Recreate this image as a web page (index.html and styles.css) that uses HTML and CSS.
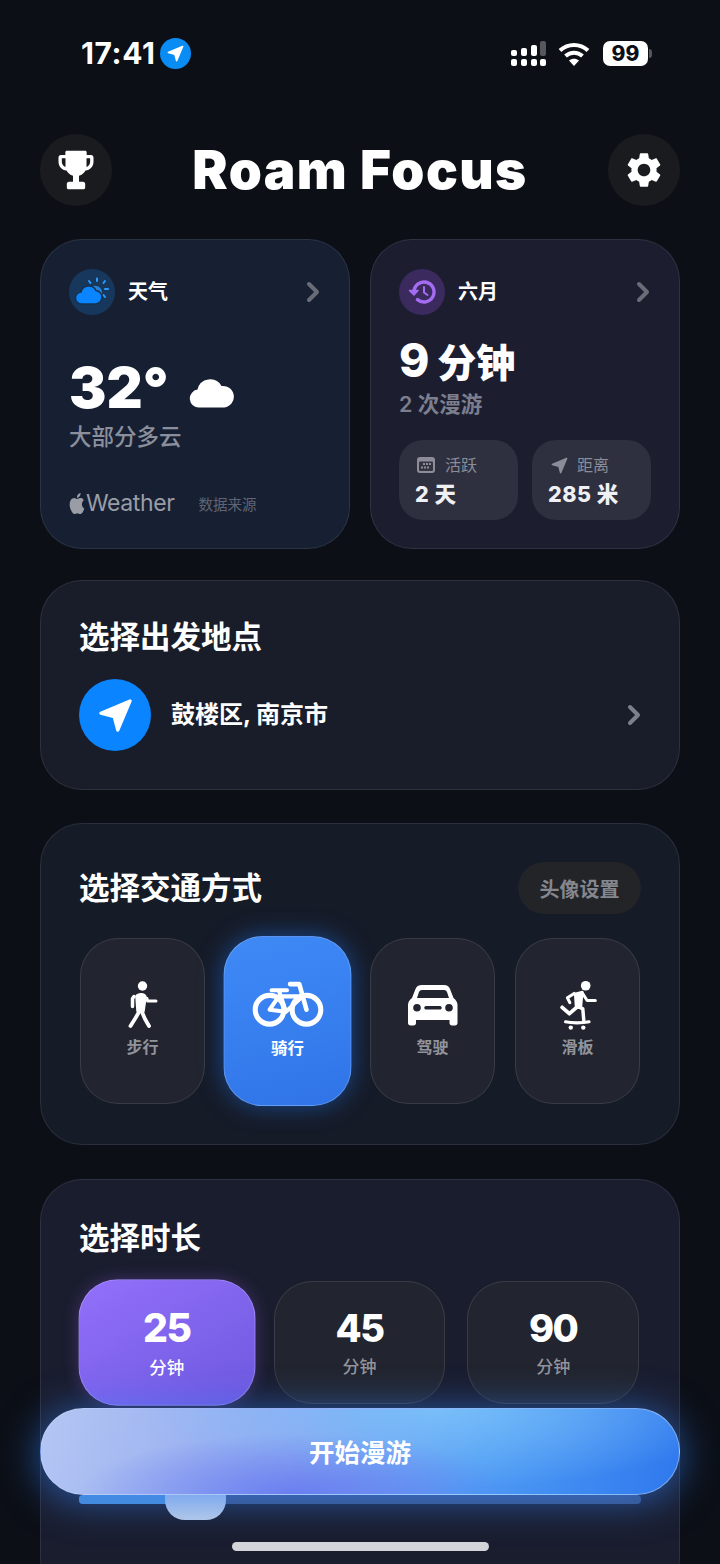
FILE: index.html
```html
<!DOCTYPE html>
<html lang="zh">

<head>
    <meta charset="UTF-8">
    <title>Roam Focus</title>
    <link rel="stylesheet" href="styles.css">
</head>

<body>
    <svg class="defs" width="0" height="0">
        <symbol id="chev" viewBox="0 0 14 22"><path d="M3 3l8 8-8 8" fill="none" stroke="currentColor" stroke-width="4" stroke-linecap="round" stroke-linejoin="round"/></symbol>
        <symbol id="arrow" viewBox="0 0 24 24"><path d="M21 3L3 10.6l8.2 2.2L13.4 21z" fill="currentColor" stroke="currentColor" stroke-width="2" stroke-linejoin="round"/></symbol>
    </svg>

    <div class="phone">
        <div class="status">
            <div class="status-left">
                <span class="time">17:41</span>
                <span class="loc-dot"><svg width="19" height="19"><use href="#arrow"/></svg></span>
            </div>
            <div class="status-right">
                <svg class="signal" width="36" height="26" viewBox="0 0 36 26" fill="#fff">
                    <rect x="0" y="10" width="6" height="6" rx="2"/><rect x="10" y="8" width="6" height="8" rx="2"/><rect x="20" y="5" width="6" height="11" rx="2"/><rect x="29" y="1" width="6" height="15" rx="2" fill="#55575c"/>
                    <rect x="0" y="19" width="6" height="7" rx="2"/><rect x="10" y="19" width="6" height="7" rx="2"/><rect x="20" y="19" width="6" height="7" rx="2"/><rect x="29" y="19" width="6" height="7" rx="2"/>
                </svg>
                <svg class="wifi" width="32" height="25" viewBox="0 0 32 25" fill="none" stroke="#fff" stroke-width="4">
                    <path d="M2 9.5C10 2 22 2 30 9.5"/><path d="M7.5 15c5-4.5 12-4.5 17 0"/><path d="M16 25l-5-5.5c3-2.3 7-2.3 10 0z" fill="#fff" stroke="none"/>
                </svg>
                <div class="battery"><span class="battery-level">99</span><span class="battery-tip"></span></div>
            </div>
        </div>

        <header class="top">
            <button class="round-btn">
                <svg width="40" height="44" viewBox="0 0 24 26" fill="#fff"><path d="M6.5 1.5h11c.5 0 .9.4.9 1V4H21c.9 0 1.5.6 1.5 1.5V8c0 2.8-2 5-4.8 5.3-.8 1.6-2.2 2.7-3.9 3.1V20h2.4c.8 0 1.3.6 1.3 1.3v2.4c0 .5-.3.8-.8.8H7.3c-.5 0-.8-.3-.8-.8v-2.4c0-.7.5-1.3 1.3-1.3h2.4v-3.6c-1.7-.4-3.1-1.5-3.9-3.1C3.500 13 1.500 10.800 1.500 8V5.500C1.500 4.600 2.100 4 3 4h2.600V2.500c0-.6.400-1 .9-1zM3.500 6v2c0 1.500.9 2.800 2.200 3.200V6zm17 0h-2.200v5.200c1.300-.4 2.200-1.700 2.200-3.200z" fill-rule="evenodd"/></svg>
            </button>
            <h1 class="brand">Roam Focus</h1>
            <button class="round-btn">
                <svg width="42" height="42" viewBox="0 0 24 24" fill="#fff"><path d="M19.14 12.94c.04-.3.06-.61.06-.94 0-.32-.02-.64-.07-.94l2.03-1.58c.18-.14.23-.41.12-.61l-1.92-3.32c-.12-.22-.37-.29-.59-.22l-2.39.96c-.5-.38-1.03-.7-1.62-.94l-.36-2.54c-.04-.24-.24-.41-.48-.41h-3.84c-.24 0-.43.17-.47.41l-.36 2.54c-.59.24-1.13.57-1.62.94l-2.39-.96c-.22-.08-.47 0-.59.22L2.74 8.87c-.12.21-.08.47.12.61l2.03 1.58c-.05.3-.09.63-.09.94s.02.64.07.94l-2.03 1.58c-.18.14-.23.41-.12.61l1.92 3.32c.12.22.37.29.59.22l2.39-.96c.5.38 1.03.7 1.62.94l.36 2.54c.05.24.24.41.48.41h3.84c.24 0 .44-.17.47-.41l.36-2.54c.59-.24 1.13-.56 1.62-.94l2.39.96c.22.08.47 0 .59-.22l1.92-3.32c.12-.22.07-.47-.12-.61l-2.01-1.58zM12 15.6c-1.98 0-3.6-1.62-3.6-3.6s1.62-3.6 3.6-3.6 3.6 1.62 3.6 3.6-1.62 3.6-3.6 3.6z"/></svg>
            </button>
        </header>

        <div class="two-up">
            <section class="card small weather">
                <div class="small-head">
                    <span class="badge badge-blue">
                        <svg width="34" height="30" viewBox="0 0 34 30">
                            <g stroke="#2b9bff" stroke-width="2" stroke-linecap="round" fill="none"><path d="M22 1.500v2.500M14 4l1.500 2M30 4l-1.500 2M33 12h-3M30 20l-1.500-2"/></g>
                            <path d="M16 10a7 7 0 0 1 11 6 7 7 0 0 1-3 5l-3-1z" fill="#2b9bff" opacity=".75"/>
                            <path d="M7 27a6 6 0 0 1-1-12 8 8 0 0 1 15-1.500A6.800 6.800 0 0 1 21 27z" fill="#0a84ff" stroke="#17324f" stroke-width="1.500"/>
                        </svg>
                    </span>
                    <span class="small-title">天气</span>
                    <svg class="chev" width="14" height="22"><use href="#chev"/></svg>
                </div>
                <div class="temp-row">
                    <span class="temp">32°</span>
                    <svg width="46" height="32" viewBox="0 0 46 32" fill="#fff"><path d="M10 31.500a9 9 0 0 1-1.500-17.900A13 13 0 0 1 32.500 10 10.800 10.800 0 0 1 35.500 31.500z"/></svg>
                </div>
                <p class="sub">大部分多云</p>
                <div class="source">
                    <svg class="apple" width="18" height="21" viewBox="0 0 24 24" fill="#9a9da6" preserveAspectRatio="none"><path d="M12.152 6.896c-.948 0-2.415-1.078-3.96-1.04-2.04.027-3.91 1.183-4.961 3.014-2.117 3.675-.546 9.103 1.519 12.09 1.013 1.454 2.208 3.09 3.792 3.039 1.52-.065 2.09-.987 3.935-.987 1.831 0 2.35.987 3.96.948 1.637-.026 2.676-1.48 3.676-2.948 1.156-1.688 1.636-3.325 1.662-3.415-.039-.013-3.182-1.221-3.22-4.857-.026-3.04 2.48-4.494 2.597-4.559-1.429-2.09-3.623-2.324-4.39-2.376-2-.156-3.675 1.09-4.61 1.09zM15.53 3.83c.843-1.012 1.4-2.427 1.245-3.83-1.207.052-2.662.805-3.532 1.818-.78.896-1.454 2.338-1.273 3.714 1.338.104 2.715-.688 3.559-1.701"/></svg>
                    <span class="source-name">Weather</span>
                    <span class="source-note">数据来源</span>
                </div>
            </section>

            <section class="card small month">
                <div class="small-head">
                    <span class="badge badge-purple">
                        <svg width="28" height="26" viewBox="0 0 28 26" fill="none" stroke="#a46cf2" stroke-width="3.400" stroke-linecap="round" stroke-linejoin="round">
                            <path d="M6 13a10 10 0 1 1 3.500 7.600"/>
                            <path d="M16 8v5.500l3.500 2.500" stroke-width="2"/>
                            <path d="M1.500 11.500L6 16l4-4.500z" fill="#a46cf2" stroke-width="1.500"/>
                        </svg>
                    </span>
                    <span class="small-title">六月</span>
                    <svg class="chev" width="14" height="22"><use href="#chev"/></svg>
                </div>
                <div class="minutes"><span class="minutes-num">9</span> 分钟</div>
                <p class="sub sub-month">2 次漫游</p>
                <div class="stats">
                    <div class="stat">
                        <div class="stat-label">
                            <svg width="18" height="16" viewBox="0 0 18 16"><rect width="18" height="16" rx="3" fill="#8b8d98"/><rect x="2" y="4.500" width="14" height="9.500" rx="1" fill="#33343f"/><g fill="#8b8d98"><rect x="6" y="6" width="2" height="2"/><rect x="9" y="6" width="2" height="2"/><rect x="12" y="6" width="2" height="2"/><rect x="4" y="9.500" width="2" height="2"/><rect x="7" y="9.500" width="2" height="2"/><rect x="10" y="9.500" width="2" height="2"/></g></svg>
                            活跃
                        </div>
                        <div class="stat-value">2 天</div>
                    </div>
                    <div class="stat">
                        <div class="stat-label">
                            <svg class="stat-arrow" width="19" height="19"><use href="#arrow"/></svg>
                            距离
                        </div>
                        <div class="stat-value">285 米</div>
                    </div>
                </div>
            </section>
        </div>

        <section class="card place">
            <h2 class="section-title">选择出发地点</h2>
            <div class="place-row">
                <span class="place-icon"><svg width="39" height="39"><use href="#arrow"/></svg></span>
                <span class="place-name">鼓楼区, 南京市</span>
                <svg class="chev place-chev" width="14" height="22"><use href="#chev"/></svg>
            </div>
        </section>

        <section class="card modes">
            <div class="modes-head">
                <h2 class="section-title">选择交通方式</h2>
                <button class="pill">头像设置</button>
            </div>
            <div class="mode-grid">
                <div class="tile mode">
                    <svg width="32" height="50" viewBox="0 0 32 50" fill="none" stroke="#fff" stroke-linecap="round" stroke-linejoin="round">
                        <circle cx="15.500" cy="6" r="4.700" fill="#fff" stroke="none"/>
                        <path d="M10 17c0-2.500 7-3.500 8 0l-2 14h-5z" fill="#fff" stroke-width="3.500"/>
                        <path d="M7 16.500l-1.500 2v8" stroke-width="3.500"/>
                        <path d="M20 18.500l.5 2.500H29" stroke-width="3"/>
                        <path d="M12 32L8.500 38 3.500 46" stroke-width="3.800"/>
                        <path d="M15 32l3 7 4 7" stroke-width="3.800"/>
                    </svg>
                    <span class="tile-label">步行</span>
                </div>
                <div class="tile mode active-blue">
                    <svg width="70" height="46" viewBox="0 0 70 46" fill="none" stroke="#fff" stroke-linecap="round" stroke-linejoin="round">
                        <circle cx="17" cy="28" r="14" stroke-width="5"/>
                        <circle cx="53" cy="28" r="14" stroke-width="5"/>
                        <path d="M37 3h9l7 25" stroke-width="4.500"/>
                        <path d="M19 9h15M26 9l7 21M26 15h23L33 30 17 28l9-13" stroke-width="4"/>
                    </svg>
                    <span class="tile-label">骑行</span>
                </div>
                <div class="tile mode">
                    <svg width="50" height="40" viewBox="0 0 50 42"><path d="M14 1h22c3 0 5 1.500 6 4l3.500 9c2.500 2 4 4 4 7v18c0 1.500-1 2.500-2.500 2.500h-3c-1.500 0-2.500-1-2.500-2.500v-3H8v3c0 1.500-1 2.500-2.500 2.500h-3C1 41.500 0 40.500 0 39V21c0-3 1.500-5 4-7l3.500-9c1-2.500 3-4 6.500-4zM14 6c-1.500 0-2.500.7-3 2l-2 6h32l-2-6c-.5-1.300-1.500-2-3-2zM9 20a3.800 3.800 0 1 0 0 7.600A3.800 3.800 0 0 0 9 20zm32 0a3.800 3.800 0 1 0 0 7.600 3.800 3.800 0 0 0 0-7.600zM18 22c-1 0-1.700.8-1.700 1.800s.7 1.800 1.700 1.800h14c1 0 1.700-.8 1.700-1.800S33 22 32 22z" fill="#fff" fill-rule="evenodd"/></svg>
                    <span class="tile-label">驾驶</span>
                </div>
                <div class="tile mode">
                    <svg width="42" height="52" viewBox="0 0 42 52" fill="none" stroke="#fff" stroke-linecap="round" stroke-linejoin="round">
                        <circle cx="29" cy="6" r="5" fill="#fff" stroke="none"/>
                        <path d="M18 14.500l7.500-2L24 29h-5z" fill="#fff" stroke-width="2.500"/>
                        <path d="M25.500 13.500l5 7.800H39" stroke-width="3.200"/>
                        <path d="M17 14l-7 4.500 2.500 5" stroke-width="3.200"/>
                        <path d="M19 29l-7 6-7.500-6.500" stroke-width="4"/>
                        <path d="M22 28l4 2 1 12" stroke-width="3.600"/>
                        <path d="M8 43.500c6 1.500 18 1.500 24.500 0" stroke-width="3.200"/>
                        <circle cx="13.500" cy="49.500" r="2.300" fill="#fff" stroke="none"/>
                        <circle cx="26.500" cy="49.500" r="2.300" fill="#fff" stroke="none"/>
                    </svg>
                    <span class="tile-label">滑板</span>
                </div>
            </div>
        </section>

        <section class="card durations">
            <h2 class="section-title">选择时长</h2>
            <div class="dur-grid">
                <div class="tile dur active-purple"><span class="dur-num">25</span><span class="tile-label">分钟</span></div>
                <div class="tile dur"><span class="dur-num">45</span><span class="tile-label">分钟</span></div>
                <div class="tile dur"><span class="dur-num">90</span><span class="tile-label">分钟</span></div>
            </div>
            <div class="slider">
                <div class="slider-fill"></div>
                <div class="slider-thumb"></div>
            </div>
        </section>

        <button class="start">开始漫游</button>
        <div class="home-bar"></div>
    </div>
</body>

</html>
```

FILE: styles.css
```css
* {
    box-sizing: border-box;
}

html, body {
    margin: 0;
    background: #0c0f16;
}

body {
    font-family: Inter, "Noto Sans CJK SC", sans-serif;
    color: #fff;
}

h1, h2, p {
    margin: 0;
}

button {
    font-family: inherit;
    border: 0;
    padding: 0;
    color: inherit;
}

.defs {
    position: absolute;
}

.phone {
    position: relative;
    width: 720px;
    height: 1564px;
    overflow: hidden;
    padding: 0 40px;
}

/* status bar */
.status {
    height: 134px;
    margin: 0 28px 0 41px;
    padding-top: 38px;
    display: flex;
    justify-content: space-between;
    align-items: flex-start;
}

.status-left {
    display: flex;
    align-items: center;
    gap: 5px;
}

.time {
    font-size: 30px;
    font-weight: 700;
    line-height: 31px;
    letter-spacing: 0.6px;
}

.loc-dot {
    width: 31px;
    height: 31px;
    border-radius: 50%;
    background: #0a8cf5;
    display: flex;
    align-items: center;
    justify-content: center;
}

.status-right {
    display: flex;
    align-items: center;
    gap: 13px;
    padding-top: 2px;
}

.signal {
    margin-right: -2px;
}

.battery {
    display: flex;
    align-items: center;
    gap: 1px;
}

.battery-level {
    width: 45px;
    height: 25px;
    border-radius: 7px;
    background: #fff;
    color: #0b0e15;
    font-size: 21px;
    font-weight: 800;
    line-height: 25px;
    text-align: center;
}

.battery-tip {
    width: 3px;
    height: 9px;
    border-radius: 0 3px 3px 0;
    background: #55575c;
}

/* header */
.top {
    height: 72px;
    margin-bottom: 33px;
    display: flex;
    align-items: center;
    justify-content: space-between;
}

.round-btn {
    width: 72px;
    height: 72px;
    border-radius: 50%;
    background: #1a1b1f;
    display: flex;
    align-items: center;
    justify-content: center;
}

.brand {
    font-size: 53px;
    font-weight: 900;
    letter-spacing: 1.4px;
}

/* cards */
.card {
    border: 1px solid rgba(255, 255, 255, 0.09);
    border-radius: 42px;
}

.two-up {
    display: flex;
    gap: 20px;
    margin-bottom: 31px;
}

.small {
    flex: 1;
    height: 310px;
    padding: 28px 28px 0;
}

.weather {
    background: #172033;
}

.month {
    background: #1c1e30;
}

.small-head {
    display: flex;
    align-items: center;
    gap: 13px;
    height: 48px;
}

.badge {
    width: 46px;
    height: 46px;
    border-radius: 50%;
    display: flex;
    align-items: center;
    justify-content: center;
}

.badge-blue {
    background: #17385c;
}

.badge-purple {
    background: #3a2a5e;
}

.small-title {
    flex: 1;
    font-size: 20px;
    font-weight: 700;
    margin-top: -3px;
}

.chev {
    color: #6a6d78;
}

.small .chev {
    margin-right: 1px;
}

.temp-row {
    display: flex;
    align-items: flex-end;
    gap: 20px;
    margin-top: 40px;
    height: 64px;
}

.temp {
    font-size: 56px;
    font-weight: 900;
    line-height: 64px;
}

.temp-row svg {
    margin-bottom: 12px;
}

.sub {
    font-size: 22.500px;
    font-weight: 500;
    line-height: 30px;
    color: #8b8f9c;
    margin-top: 2px;
}

.source {
    display: flex;
    align-items: center;
    margin-top: 35px;
}

.apple {
    margin-left: -1px;
}

.source-name {
    font-size: 23px;
    line-height: 32px;
    color: #9a9da6;
    letter-spacing: -0.4px;
}

.source-note {
    margin-left: 24px;
    font-size: 14.500px;
    color: #5f6472;
}

.minutes {
    margin-top: 16px;
    font-size: 39px;
    font-weight: 900;
    line-height: 56px;
}

.minutes-num {
    font-size: 46px;
    font-weight: 800;
}

.sub-month {
    margin-top: -2px;
    font-size: 21.500px;
    font-weight: 600;
    color: #7c7e8e;
}

.stats {
    display: flex;
    gap: 14px;
    margin-top: 21px;
}

.stat {
    flex: 1;
    height: 80px;
    border-radius: 24px;
    background: #2e2f3f;
    padding: 14px 16px;
}

.stat-label {
    display: flex;
    align-items: center;
    gap: 10px;
    font-size: 16px;
    line-height: 22px;
    color: #8b8d98;
    padding-left: 2px;
    margin-bottom: 3px;
}

.stat-arrow {
    color: #8b8d98;
    margin-right: -2px;
}

.stat-value {
    font-size: 21.500px;
    font-weight: 800;
    line-height: 30px;
    letter-spacing: 0.5px;
    color: #eef0f4;
}

.section-title {
    font-size: 30.500px;
    font-weight: 700;
    line-height: 40px;
}

.place {
    height: 210px;
    margin-bottom: 33px;
    padding: 36px 38px 0;
    background: #191d2a;
}

.place-row {
    display: flex;
    align-items: center;
    gap: 20px;
    margin-top: 22px;
}

.place-icon {
    width: 72px;
    height: 72px;
    border-radius: 50%;
    background: #0a84ff;
    display: flex;
    align-items: center;
    justify-content: center;
}

.place-name {
    flex: 1;
    font-size: 24px;
    font-weight: 700;
    padding-bottom: 5px;
}

.place-chev {
    color: #7d808a;
}

.modes {
    height: 322px;
    margin-bottom: 34px;
    padding: 38px 39px 0;
    background: #161b28;
}

.modes .section-title, .durations .section-title {
    margin-left: -1px;
}

.modes-head {
    display: flex;
    justify-content: space-between;
    align-items: center;
    height: 52px;
}

.pill {
    width: 123px;
    height: 52px;
    margin-right: -1px;
    border-radius: 26px;
    background: #222428;
    color: #85878f;
    font-size: 20px;
    font-weight: 700;
}

/* choice tiles */
.tile {
    border: 1px solid rgba(255, 255, 255, 0.11);
    border-radius: 38px;
    background: #22252f;
    display: flex;
    flex-direction: column;
    align-items: center;
}

.tile-label {
    font-size: 16px;
    font-weight: 600;
    line-height: 22px;
    color: #92949c;
}

.mode-grid {
    display: grid;
    grid-template-columns: repeat(4, 1fr);
    gap: 20px;
    margin-top: 24px;
}

.mode {
    height: 166px;
    justify-content: center;
    gap: 6px;
    padding-bottom: 5px;
}

.mode svg {
    height: 50px;
}

.active-blue {
    transform: scale(1.025);
    background: linear-gradient(165deg, #3f8af7, #3074e8);
    border-color: rgba(255, 255, 255, 0.2);
    box-shadow: 0 0 24px rgba(30, 120, 240, 0.5);
}

.active-blue .tile-label, .active-purple .tile-label {
    color: #fff;
}

.durations {
    height: 420px;
    padding: 38px 40px 0 39px;
    background: #1a1d2e;
}

.dur-grid {
    display: grid;
    grid-template-columns: repeat(3, 1fr);
    gap: 22px;
    margin-top: 23px;
}

.dur {
    height: 123px;
    justify-content: center;
    gap: 5px;
    padding-bottom: 2px;
}

.dur .tile-label {
    font-size: 17px;
    font-weight: 500;
}

.dur-num {
    font-size: 38px;
    font-weight: 800;
    line-height: 46px;
    letter-spacing: -1.5px;
}

.active-purple {
    transform: translateX(1px) scale(1.03);
    background: linear-gradient(150deg, #9370fb, #6d58de);
    border-color: rgba(255, 255, 255, 0.2);
    box-shadow: 0 0 16px rgba(150, 90, 230, 0.3);
}

.slider {
    position: relative;
    height: 9px;
    margin: 91px -2px 0 -1px;
    border-radius: 4px;
    background: #3a5080;
}

.slider-fill {
    width: 90px;
    height: 9px;
    border-radius: 4px 0 0 4px;
    background: #4b8fd6;
}

.slider-thumb {
    position: absolute;
    left: 86px;
    top: -12px;
    width: 61px;
    height: 37px;
    border-radius: 0 0 20px 20px;
    background: linear-gradient(#a8bfe6, #bccde8);
}

/* floating button */
.start {
    position: absolute;
    left: 40px;
    top: 1408px;
    width: 640px;
    height: 87px;
    padding-bottom: 3px;
    border-radius: 44px;
    border: 1px solid rgba(190, 215, 255, 0.5);
    font-size: 25.500px;
    font-weight: 700;
    background:
        radial-gradient(ellipse 220px 60px at 40% 100%, rgba(100, 120, 240, 0.85), transparent),
        radial-gradient(ellipse 300px 80px at 62% 0, rgba(125, 195, 250, 0.85), transparent),
        linear-gradient(105deg, #b4c6f3 0%, #8fa6f0 40%, #4f9cf4 68%, #2f78ee 100%);
    box-shadow: 0 4px 40px rgba(50, 130, 250, 0.65);
}

.home-bar {
    position: absolute;
    left: 232px;
    top: 1542px;
    width: 257px;
    height: 9px;
    border-radius: 5px;
    background: #d2d4da;
}
```
